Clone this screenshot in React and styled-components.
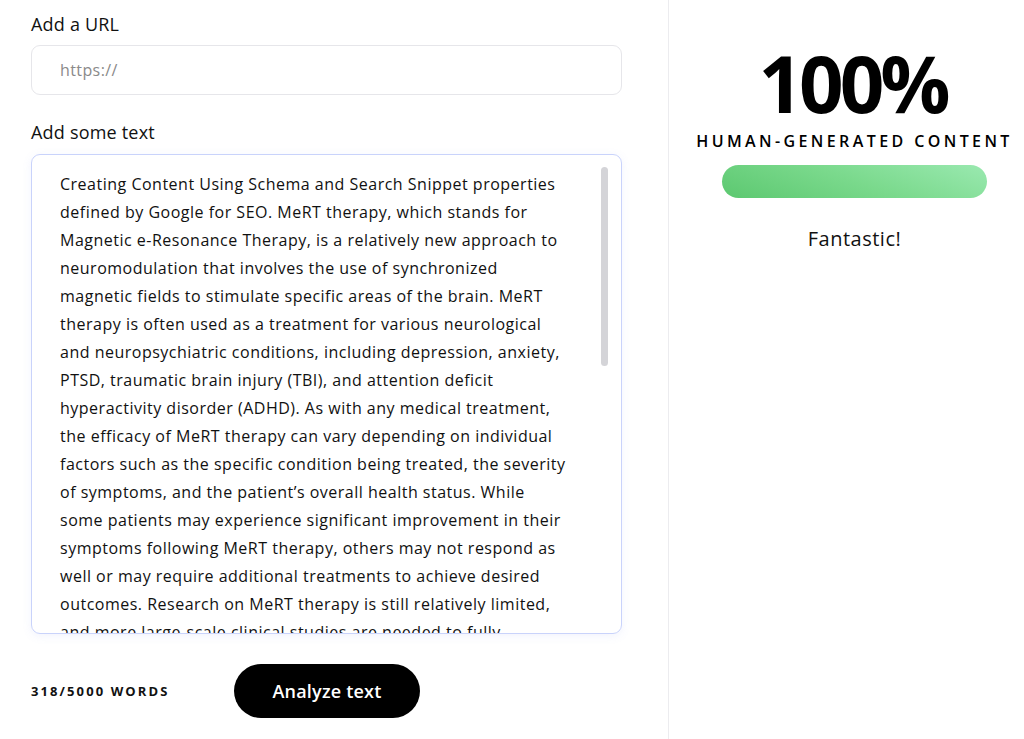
import React from "react";
import styled, { createGlobalStyle } from "styled-components";

const GlobalStyle = createGlobalStyle`
    body {
        margin: 0;
        background: #ffffff;
        font-family: "Open Sans", "Noto Sans", sans-serif;
        color: #111111;
    }
`;

const LINES = [
    "Creating Content Using Schema and Search Snippet properties",
    "defined by Google for SEO. MeRT therapy, which stands for",
    "Magnetic e-Resonance Therapy, is a relatively new approach to",
    "neuromodulation that involves the use of synchronized",
    "magnetic fields to stimulate specific areas of the brain. MeRT",
    "therapy is often used as a treatment for various neurological",
    "and neuropsychiatric conditions, including depression, anxiety,",
    "PTSD, traumatic brain injury (TBI), and attention deficit",
    "hyperactivity disorder (ADHD). As with any medical treatment,",
    "the efficacy of MeRT therapy can vary depending on individual",
    "factors such as the specific condition being treated, the severity",
    "of symptoms, and the patient\u2019s overall health status. While",
    "some patients may experience significant improvement in their",
    "symptoms following MeRT therapy, others may not respond as",
    "well or may require additional treatments to achieve desired",
    "outcomes. Research on MeRT therapy is still relatively limited,",
    "and more large-scale clinical studies are needed to fully",
];

export default function App() {
    return (
        <>
            <GlobalStyle />
            <Page>
                <Editor>
                    <Label>Add a URL</Label>
                    <UrlInput placeholder="https://" />
                    <Label $spaced>Add some text</Label>
                    <TextBox>
                        <TextLines>
                            {LINES.map((line) => (
                                <span key={line}>{line}</span>
                            ))}
                        </TextLines>
                        <Thumb />
                    </TextBox>
                    <Footer>
                        <WordCount>318/5000 words</WordCount>
                        <AnalyzeButton>Analyze text</AnalyzeButton>
                    </Footer>
                </Editor>
                <Result>
                    <Score>100%</Score>
                    <Verdict>Human-generated content</Verdict>
                    <Meter />
                    <Remark>Fantastic!</Remark>
                </Result>
            </Page>
        </>
    );
}

const Page = styled.div`
    display: flex;
    width: 1024px;
    height: 739px;
    overflow: hidden;
`;

const Editor = styled.section`
    width: 669px;
    flex-shrink: 0;
    box-sizing: border-box;
    padding: 11px 46px 0 31px;
    border-right: 1px solid #ececef;
    display: flex;
    flex-direction: column;
`;

const Label = styled.div`
    font-size: 18px;
    font-weight: 500;
    line-height: 27px;
    letter-spacing: 0.2px;
    color: #111;
    margin: ${(p) => (p.$spaced ? "24px 0 8px" : "0 0 7px")};
`;

const UrlInput = styled.input`
    box-sizing: border-box;
    width: 100%;
    height: 50px;
    border: 1px solid #e6e6ea;
    border-radius: 9px;
    padding: 0 28px;
    font-family: inherit;
    font-size: 16px;
    letter-spacing: 0.4px;
    color: #111;
    outline: none;
    &::placeholder {
        color: #8a8a8a;
    }
`;

const TextBox = styled.div`
    position: relative;
    box-sizing: border-box;
    height: 480px;
    border: 1px solid #c9d3fb;
    border-radius: 9px;
    box-shadow: 0 2px 10px rgba(120, 140, 240, 0.1);
    padding: 15px 0 0 28px;
    overflow: hidden;
`;

const TextLines = styled.div`
    display: flex;
    flex-direction: column;
    font-size: 16px;
    line-height: 28px;
    letter-spacing: 0.5px;
    color: #111;
    span {
        white-space: nowrap;
    }
`;

const Thumb = styled.div`
    position: absolute;
    top: 12px;
    right: 13px;
    width: 7px;
    height: 199px;
    border-radius: 4px;
    background: #d4d4d8;
`;

const Footer = styled.div`
    display: flex;
    align-items: center;
    gap: 64px;
    margin-top: 30px;
`;

const WordCount = styled.div`
    font-size: 13px;
    font-weight: 700;
    letter-spacing: 2.1px;
    text-transform: uppercase;
    color: #111;
    width: 139px;
    white-space: nowrap;
`;

const AnalyzeButton = styled.button`
    width: 186px;
    height: 54px;
    border: none;
    border-radius: 27px;
    background: #000;
    color: #fff;
    font-family: inherit;
    font-size: 18px;
    font-weight: 600;
    letter-spacing: 0.2px;
    cursor: pointer;
`;

const Result = styled.section`
    flex: 1;
    padding: 43px 0 0 16px;
    display: flex;
    flex-direction: column;
    align-items: center;
`;

const Score = styled.div`
    font-size: 78px;
    font-weight: 700;
    line-height: 80px;
    color: #000;
    letter-spacing: -4px;
    padding-right: 4px;
`;

const Verdict = styled.div`
    margin-top: 6px;
    font-size: 16px;
    font-weight: 600;
    line-height: 24px;
    letter-spacing: 3.4px;
    text-transform: uppercase;
    color: #000;
`;

const Meter = styled.div`
    margin-top: 12px;
    width: 265px;
    height: 33px;
    border-radius: 17px;
    background: linear-gradient(20deg, #5cc870 0%, #7ad98c 50%, #9ae9b0 100%);
`;

const Remark = styled.div`
    margin-top: 27px;
    font-size: 20px;
    letter-spacing: 0.5px;
    color: #111;
`;
